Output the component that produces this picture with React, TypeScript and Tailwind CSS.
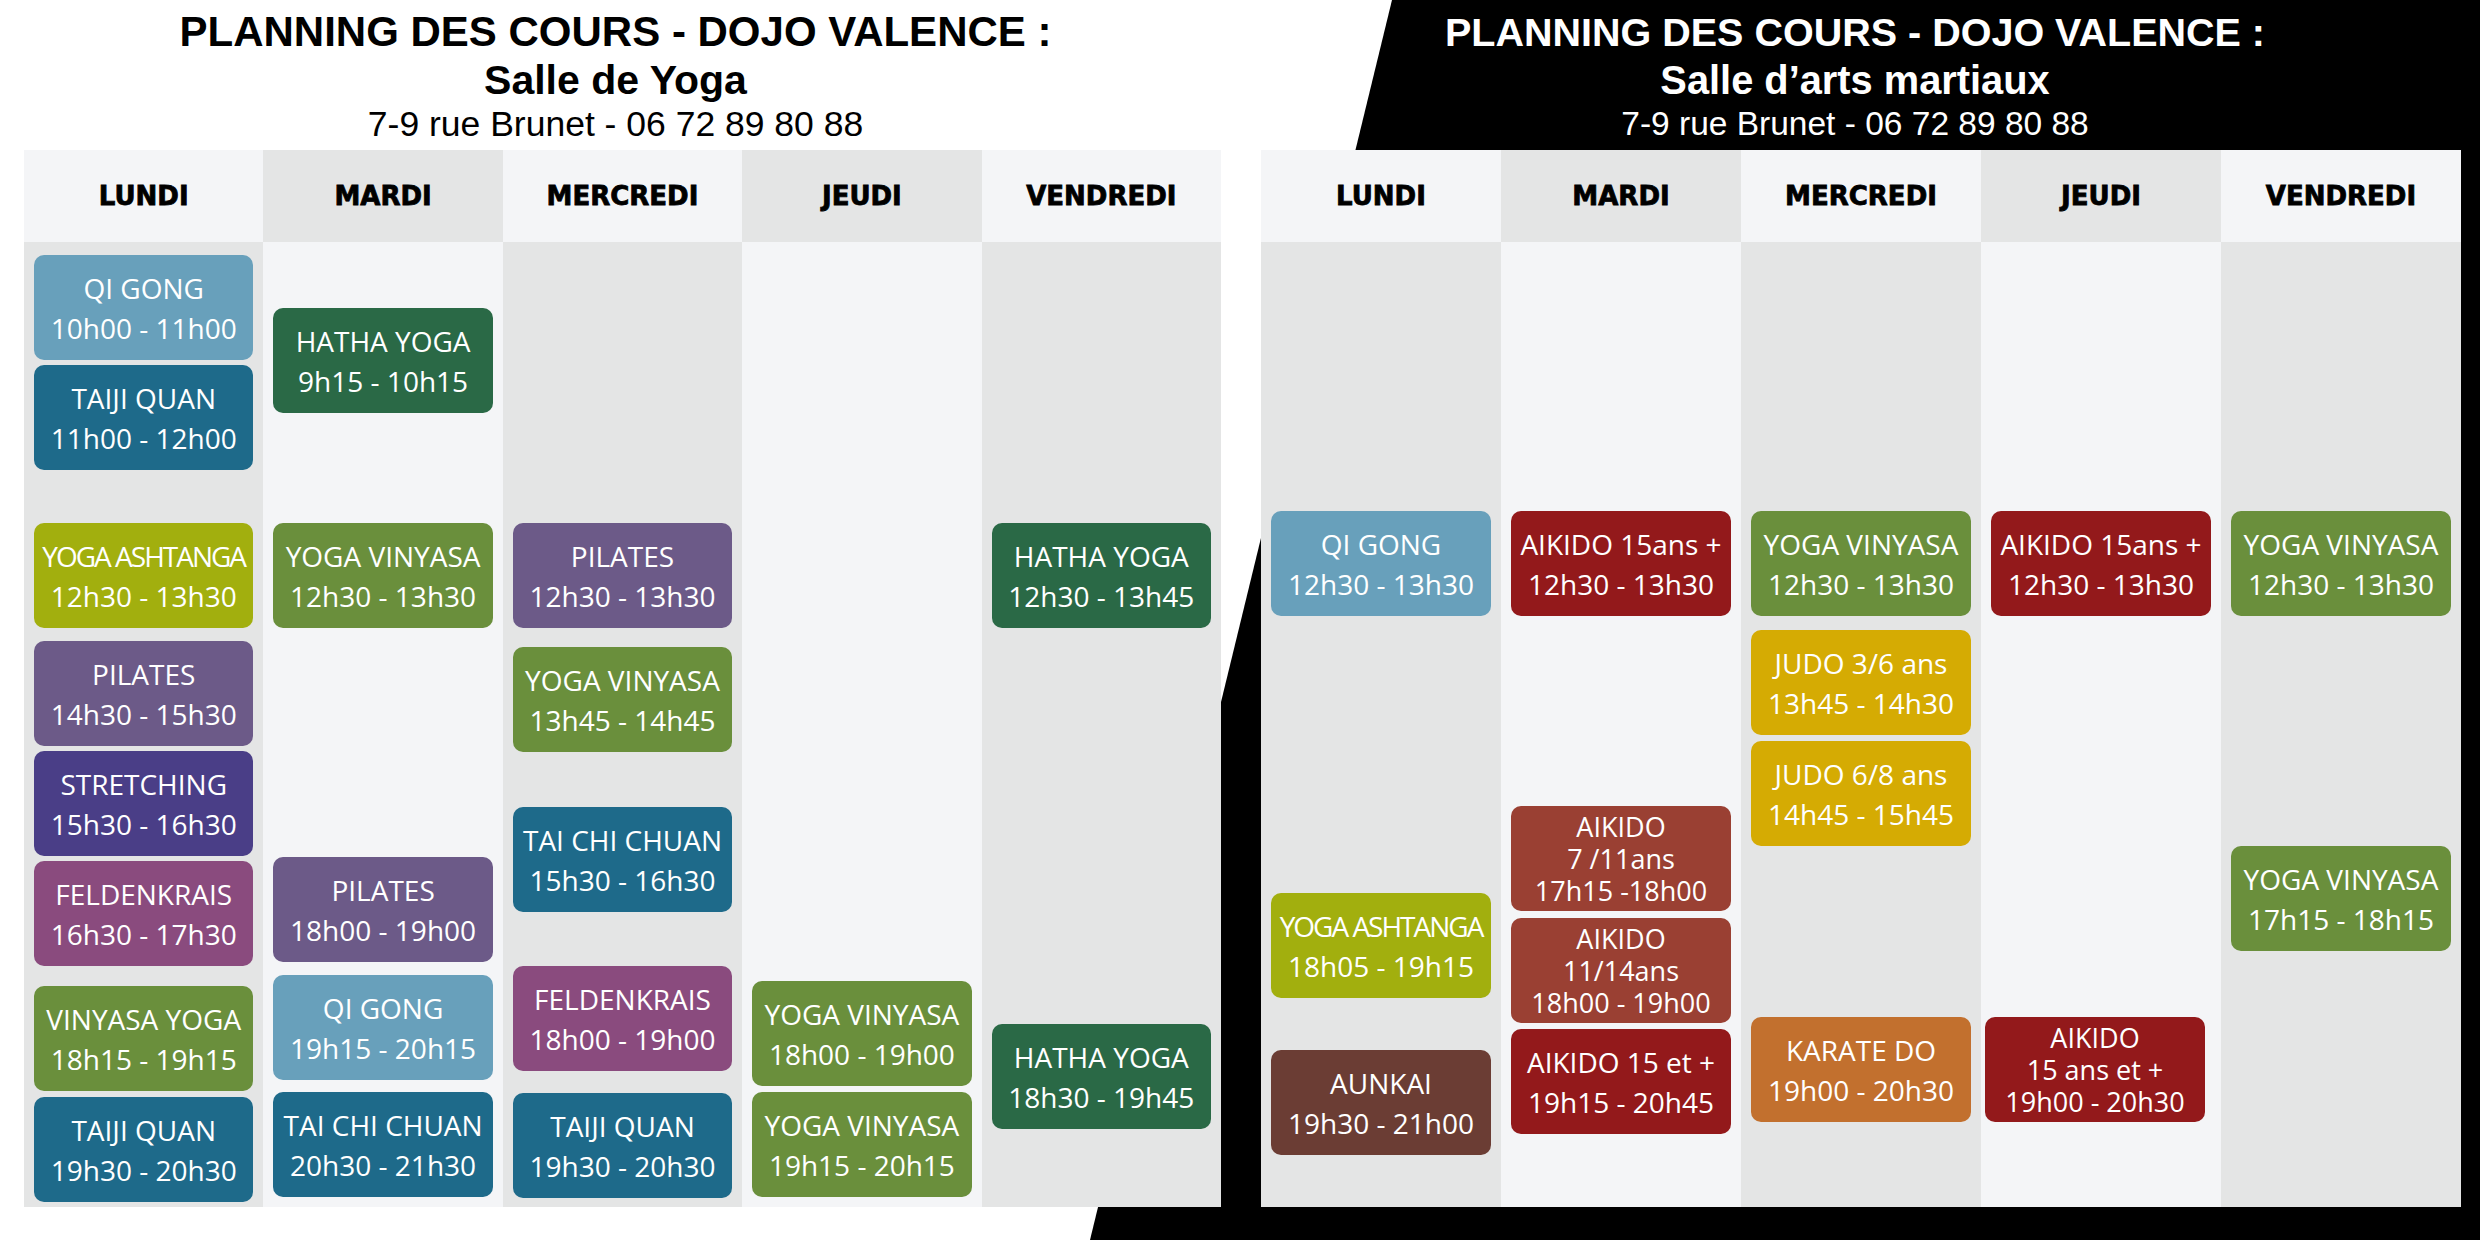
import React from 'react';

interface Course {
  mt: string;
  bg: string;
  lines: string[];
  tight?: boolean;
  shift?: string;
}

interface DayColumn {
  day: string;
  cards: Course[];
}

const QI = 'bg-[#68a0bb]';
const TEAL = 'bg-[#1e6a8a]';
const LIME = 'bg-[#a2af0e]';
const PURPLE = 'bg-[#6c5a88]';
const INDIGO = 'bg-[#4a3e87]';
const MAGENTA = 'bg-[#8a4b7e]';
const GREEN = 'bg-[#6a8f3c]';
const DARKGREEN = 'bg-[#2a6946]';
const RED = 'bg-[#93191b]';
const RUST = 'bg-[#9a4033]';
const GOLD = 'bg-[#d5ab03]';
const ORANGE = 'bg-[#c2702e]';
const BROWN = 'bg-[#6b3d34]';

const yogaRoom: DayColumn[] = [
  {
    day: 'LUNDI',
    cards: [
      { mt: 'mt-[13px]', bg: QI, lines: ['QI GONG', '10h00 - 11h00'] },
      { mt: 'mt-[5px]', bg: TEAL, lines: ['TAIJI QUAN', '11h00 - 12h00'] },
      { mt: 'mt-[53px]', bg: LIME, lines: ['YOGA ASHTANGA', '12h30 - 13h30'], tight: true },
      { mt: 'mt-[13px]', bg: PURPLE, lines: ['PILATES', '14h30 - 15h30'] },
      { mt: 'mt-[5px]', bg: INDIGO, lines: ['STRETCHING', '15h30 - 16h30'] },
      { mt: 'mt-[5px]', bg: MAGENTA, lines: ['FELDENKRAIS', '16h30 - 17h30'] },
      { mt: 'mt-[20px]', bg: GREEN, lines: ['VINYASA YOGA', '18h15 - 19h15'] },
      { mt: 'mt-[6px]', bg: TEAL, lines: ['TAIJI QUAN', '19h30 - 20h30'] },
    ],
  },
  {
    day: 'MARDI',
    cards: [
      { mt: 'mt-[66px]', bg: DARKGREEN, lines: ['HATHA YOGA', '9h15 - 10h15'] },
      { mt: 'mt-[110px]', bg: GREEN, lines: ['YOGA VINYASA', '12h30 - 13h30'] },
      { mt: 'mt-[229px]', bg: PURPLE, lines: ['PILATES', '18h00 - 19h00'] },
      { mt: 'mt-[13px]', bg: QI, lines: ['QI GONG', '19h15 - 20h15'] },
      { mt: 'mt-[12px]', bg: TEAL, lines: ['TAI CHI CHUAN', '20h30 - 21h30'] },
    ],
  },
  {
    day: 'MERCREDI',
    cards: [
      { mt: 'mt-[281px]', bg: PURPLE, lines: ['PILATES', '12h30 - 13h30'] },
      { mt: 'mt-[19px]', bg: GREEN, lines: ['YOGA VINYASA', '13h45 - 14h45'] },
      { mt: 'mt-[55px]', bg: TEAL, lines: ['TAI CHI CHUAN', '15h30 - 16h30'] },
      { mt: 'mt-[54px]', bg: MAGENTA, lines: ['FELDENKRAIS', '18h00 - 19h00'] },
      { mt: 'mt-[22px]', bg: TEAL, lines: ['TAIJI QUAN', '19h30 - 20h30'] },
    ],
  },
  {
    day: 'JEUDI',
    cards: [
      { mt: 'mt-[739px]', bg: GREEN, lines: ['YOGA VINYASA', '18h00 - 19h00'] },
      { mt: 'mt-[6px]', bg: GREEN, lines: ['YOGA VINYASA', '19h15 - 20h15'] },
    ],
  },
  {
    day: 'VENDREDI',
    cards: [
      { mt: 'mt-[281px]', bg: DARKGREEN, lines: ['HATHA YOGA', '12h30 - 13h45'] },
      { mt: 'mt-[396px]', bg: DARKGREEN, lines: ['HATHA YOGA', '18h30 - 19h45'] },
    ],
  },
];

const martialRoom: DayColumn[] = [
  {
    day: 'LUNDI',
    cards: [
      { mt: 'mt-[269px]', bg: QI, lines: ['QI GONG', '12h30 - 13h30'] },
      { mt: 'mt-[277px]', bg: LIME, lines: ['YOGA ASHTANGA', '18h05 - 19h15'], tight: true },
      { mt: 'mt-[52px]', bg: BROWN, lines: ['AUNKAI', '19h30 - 21h00'] },
    ],
  },
  {
    day: 'MARDI',
    cards: [
      { mt: 'mt-[269px]', bg: RED, lines: ['AIKIDO 15ans +', '12h30 - 13h30'] },
      { mt: 'mt-[190px]', bg: RUST, lines: ['AIKIDO', '7 /11ans', '17h15 -18h00'] },
      { mt: 'mt-[7px]', bg: RUST, lines: ['AIKIDO', '11/14ans', '18h00 - 19h00'] },
      { mt: 'mt-[6px]', bg: RED, lines: ['AIKIDO 15 et +', '19h15 - 20h45'] },
    ],
  },
  {
    day: 'MERCREDI',
    cards: [
      { mt: 'mt-[269px]', bg: GREEN, lines: ['YOGA VINYASA', '12h30 - 13h30'] },
      { mt: 'mt-[14px]', bg: GOLD, lines: ['JUDO 3/6 ans', '13h45 - 14h30'] },
      { mt: 'mt-[6px]', bg: GOLD, lines: ['JUDO 6/8 ans', '14h45 - 15h45'] },
      { mt: 'mt-[171px]', bg: ORANGE, lines: ['KARATE DO', '19h00 - 20h30'] },
    ],
  },
  {
    day: 'JEUDI',
    cards: [
      { mt: 'mt-[269px]', bg: RED, lines: ['AIKIDO 15ans +', '12h30 - 13h30'] },
      { mt: 'mt-[401px]', bg: RED, lines: ['AIKIDO', '15 ans et +', '19h00 - 20h30'], shift: 'ml-[4px] mr-[16px]' },
    ],
  },
  {
    day: 'VENDREDI',
    cards: [
      { mt: 'mt-[269px]', bg: GREEN, lines: ['YOGA VINYASA', '12h30 - 13h30'] },
      { mt: 'mt-[230px]', bg: GREEN, lines: ['YOGA VINYASA', '17h15 - 18h15'] },
    ],
  },
];

const CourseCard: React.FC<{ course: Course }> = ({ course }) => {
  const threeLines = course.lines.length > 2;
  return (
    <div
      className={`${course.mt} ${course.bg} ${course.shift ?? 'mx-[10px]'} h-[105px] shrink-0 rounded-[10px] flex flex-col items-center justify-center text-white font-['Open_Sans',sans-serif] ${threeLines ? 'text-[27px] leading-[32px]' : 'text-[28px] leading-[40px]'}`}
    >
      {course.lines.map((line, i) => (
        <span key={i} className={`whitespace-nowrap ${course.tight && i === 0 ? 'tracking-[-2px]' : ''}`}>
          {line}
        </span>
      ))}
    </div>
  );
};

const Timetable: React.FC<{ columns: DayColumn[]; width: string }> = ({ columns, width }) => (
  <div className={`grid grid-cols-5 h-[1057px] ${width}`}>
    {columns.map((col, i) => (
      <div key={col.day} className="flex flex-col min-w-0">
        <div
          className={`h-[92px] shrink-0 flex items-center justify-center ${i % 2 === 0 ? 'bg-[#f4f5f7]' : 'bg-[#e4e5e5]'}`}
        >
          <span className="text-[26px] font-bold text-black font-['DejaVu_Sans',sans-serif] [-webkit-text-stroke:0.8px_black]">
            {col.day}
          </span>
        </div>
        <div className={`flex-1 flex flex-col ${i % 2 === 0 ? 'bg-[#e4e5e5]' : 'bg-[#f4f5f7]'}`}>
          {col.cards.map((c, j) => (
            <CourseCard key={j} course={c} />
          ))}
        </div>
      </div>
    ))}
  </div>
);

export default function App() {
  return (
    <div className="relative w-[2480px] h-[1240px] bg-white overflow-hidden font-['Liberation_Sans',Arial,sans-serif]">
      {/* black slanted backdrop behind the martial arts room */}
      <div className="absolute inset-0 bg-black [clip-path:polygon(1392px_0,2480px_0,2480px_1240px,1090px_1240px)]" />

      <div className="relative flex pl-[24px] gap-[40px]">
        <div className="flex flex-col w-[1197px]">
          <div className="h-[150px] pt-[8px] pr-[14px] flex flex-col items-center text-black">
            <h1 className="text-[42px] leading-[48px] font-bold">PLANNING DES COURS - DOJO VALENCE :</h1>
            <h2 className="text-[41px] leading-[48px] font-bold">Salle de Yoga</h2>
            <p className="text-[35.5px] leading-[40px]">7-9 rue Brunet - 06 72 89 80 88</p>
          </div>
          <Timetable columns={yogaRoom} width="w-[1197px]" />
        </div>

        <div className="flex flex-col w-[1200px]">
          <div className="h-[150px] pt-[8px] pr-[12px] flex flex-col items-center text-white">
            <h1 className="text-[39.5px] leading-[48px] font-bold">PLANNING DES COURS - DOJO VALENCE :</h1>
            <h2 className="text-[39.8px] leading-[48px] font-bold">Salle d’arts martiaux</h2>
            <p className="text-[33.5px] leading-[40px]">7-9 rue Brunet - 06 72 89 80 88</p>
          </div>
          <Timetable columns={martialRoom} width="w-[1200px]" />
        </div>
      </div>
    </div>
  );
}
